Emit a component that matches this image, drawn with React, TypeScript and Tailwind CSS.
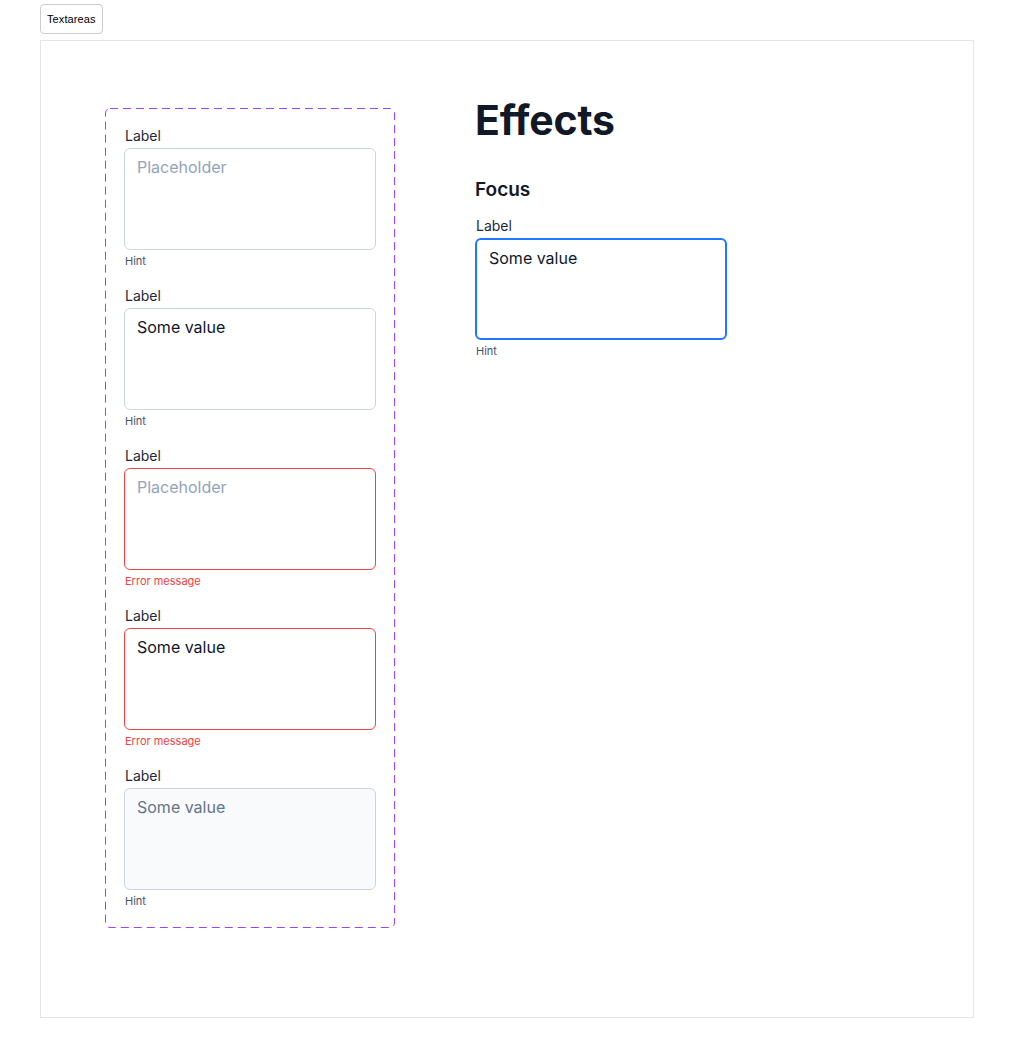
const font = { fontFamily: "Inter, 'Noto Sans', sans-serif" };

type Variant = "default" | "error" | "disabled" | "focus";

interface FieldProps {
  value?: string;
  placeholder?: string;
  variant?: Variant;
  message?: string;
}

function Field({ value, placeholder, variant = "default", message = "Hint" }: FieldProps) {
  const box =
    variant === "error"
      ? "border border-[#ef4444] bg-white"
      : variant === "disabled"
        ? "border border-[#cbd5e1] bg-[#f8fafc]"
        : variant === "focus"
          ? "border-2 border-[#1f78ff] bg-white px-[11px] pt-[5px]"
          : "border border-[#cbd5e1] bg-white";
  const text = value
    ? variant === "disabled"
      ? "text-[#64748b]"
      : "text-[#0f172a]"
    : "text-[#94a3b8]";

  return (
    <div className="flex w-[252px] flex-col">
      <div className="pl-px text-[14px] leading-[20px] text-[#1e293b]">Label</div>
      <div
        className={`mt-[2px] h-[102px] rounded-[6px] px-[12px] pt-[6px] text-[16px] leading-[24px] ${box} ${text}`}
      >
        {value ?? placeholder}
      </div>
      <div
        className={`mt-[3px] pl-px text-[11px] leading-[16px] ${
          variant === "error" ? "text-[#ef4444]" : "text-[#475569]"
        }`}
      >
        {message}
      </div>
    </div>
  );
}

export default function App() {
  return (
    <div className="min-h-screen bg-white" style={font}>
      <div className="px-[40px] pt-[4px]">
        <div
          className="inline-flex h-[30px] items-center rounded-[4px] border border-[#cccccc] px-[6px] text-[11px] tracking-[0.1px] text-black"
          style={{ fontFamily: "'Liberation Sans', Arial, sans-serif" }}
        >
          Textareas
        </div>
        <div className="mt-[6px] flex h-[978px] w-[934px] items-start gap-[80px] border border-[#e5e5e5] pl-[64px] pt-[67px]">
          <div className="relative flex flex-col gap-[17px] px-[19px] pb-[19px] pt-[18px]">
            {/* dashed component-set frame */}
            <svg className="pointer-events-none absolute inset-0 h-full w-full" aria-hidden="true">
              <rect
                x="0.5"
                y="0.5"
                width="calc(100% - 1px)"
                height="calc(100% - 1px)"
                rx="4.5"
                fill="none"
                stroke="#9747ff"
                strokeWidth="1"
                strokeDasharray="8 5"
              />
            </svg>
            <Field placeholder="Placeholder" />
            <Field value="Some value" />
            <Field placeholder="Placeholder" variant="error" message="Error message" />
            <Field value="Some value" variant="error" message="Error message" />
            <Field value="Some value" variant="disabled" />
          </div>
          <div className="flex flex-col">
            <h1 className="-mt-[12px] text-[41px] font-bold leading-[48px] tracking-[-0.2px] text-[#111827]">
              Effects
            </h1>
            <h2 className="mt-[32px] text-[19px] font-semibold leading-[28px] text-[#111827]">
              Focus
            </h2>
            <div className="mt-[12px]">
              <Field value="Some value" variant="focus" />
            </div>
          </div>
        </div>
      </div>
    </div>
  );
}
